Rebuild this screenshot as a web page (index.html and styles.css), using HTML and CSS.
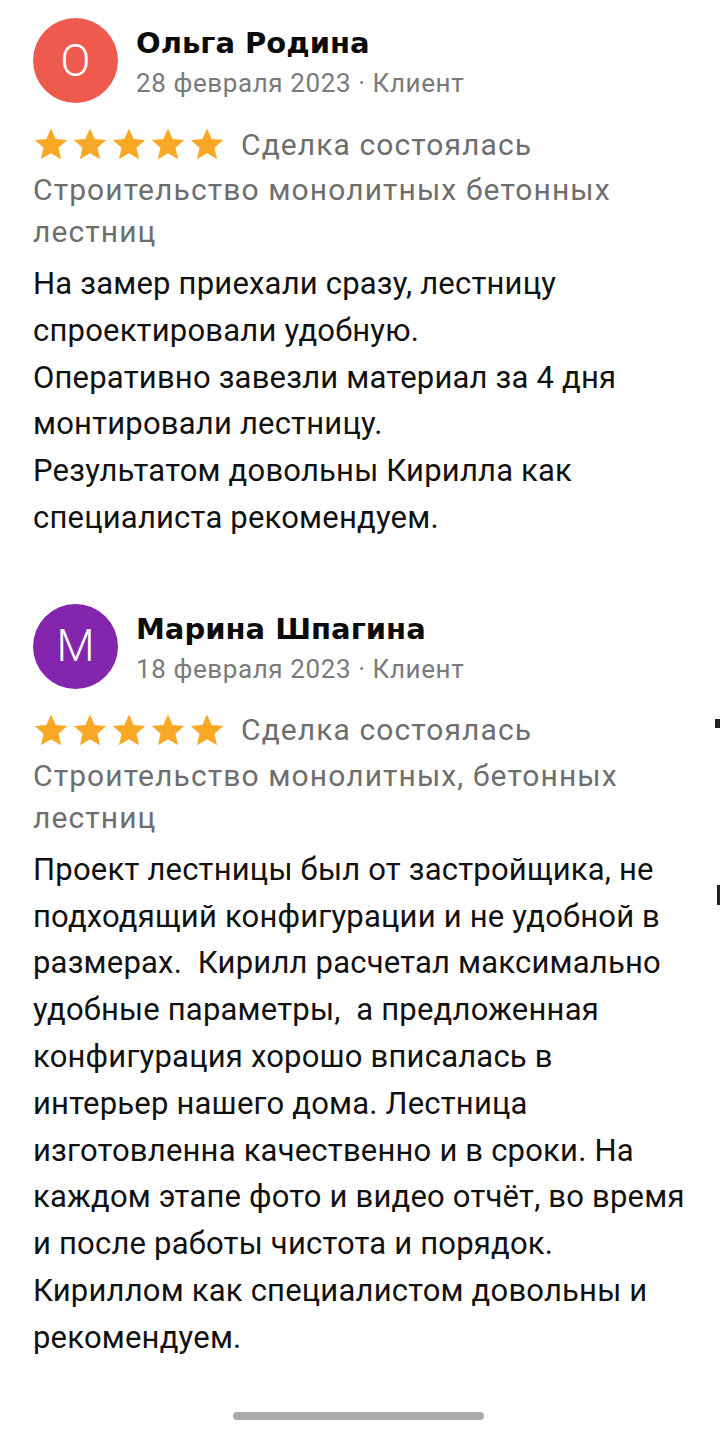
FILE: index.html
```html
<!DOCTYPE html>
<html lang="ru">
<head>
<meta charset="utf-8">
<link rel="stylesheet" href="styles.css">
</head>
<body>
<main class="page">
  <article class="review review-first">
    <header class="head">
      <div class="avatar avatar-red">О</div>
      <div class="who">
        <div class="name">Ольга Родина</div>
        <div class="meta">28 февраля 2023 · Клиент</div>
      </div>
    </header>
    <div class="rating">
      <div class="stars">
        <svg class="star" viewBox="0 0 24 24"><path d="M12 1.6l3.1 7.1 7.7.7-5.8 5.1 1.7 7.6L12 18.1l-6.7 4 1.7-7.6-5.8-5.1 7.7-.7z"/></svg>
        <svg class="star" viewBox="0 0 24 24"><path d="M12 1.6l3.1 7.1 7.7.7-5.8 5.1 1.7 7.6L12 18.1l-6.7 4 1.7-7.6-5.8-5.1 7.7-.7z"/></svg>
        <svg class="star" viewBox="0 0 24 24"><path d="M12 1.6l3.1 7.1 7.7.7-5.8 5.1 1.7 7.6L12 18.1l-6.7 4 1.7-7.6-5.8-5.1 7.7-.7z"/></svg>
        <svg class="star" viewBox="0 0 24 24"><path d="M12 1.6l3.1 7.1 7.7.7-5.8 5.1 1.7 7.6L12 18.1l-6.7 4 1.7-7.6-5.8-5.1 7.7-.7z"/></svg>
        <svg class="star" viewBox="0 0 24 24"><path d="M12 1.6l3.1 7.1 7.7.7-5.8 5.1 1.7 7.6L12 18.1l-6.7 4 1.7-7.6-5.8-5.1 7.7-.7z"/></svg>
      </div>
      <span class="deal">Сделка состоялась</span>
    </div>
    <p class="category">Строительство монолитных бетонных<br>лестниц</p>
    <p class="text">На замер приехали сразу, лестницу<br>спроектировали удобную.<br>Оперативно завезли материал за 4 дня<br>монтировали лестницу.<br>Результатом довольны Кирилла как<br>специалиста рекомендуем.</p>
  </article>

  <article class="review review-second">
    <header class="head">
      <div class="avatar avatar-purple">М</div>
      <div class="who">
        <div class="name">Марина Шпагина</div>
        <div class="meta">18 февраля 2023 · Клиент</div>
      </div>
    </header>
    <div class="rating">
      <div class="stars">
        <svg class="star" viewBox="0 0 24 24"><path d="M12 1.6l3.1 7.1 7.7.7-5.8 5.1 1.7 7.6L12 18.1l-6.7 4 1.7-7.6-5.8-5.1 7.7-.7z"/></svg>
        <svg class="star" viewBox="0 0 24 24"><path d="M12 1.6l3.1 7.1 7.7.7-5.8 5.1 1.7 7.6L12 18.1l-6.7 4 1.7-7.6-5.8-5.1 7.7-.7z"/></svg>
        <svg class="star" viewBox="0 0 24 24"><path d="M12 1.6l3.1 7.1 7.7.7-5.8 5.1 1.7 7.6L12 18.1l-6.7 4 1.7-7.6-5.8-5.1 7.7-.7z"/></svg>
        <svg class="star" viewBox="0 0 24 24"><path d="M12 1.6l3.1 7.1 7.7.7-5.8 5.1 1.7 7.6L12 18.1l-6.7 4 1.7-7.6-5.8-5.1 7.7-.7z"/></svg>
        <svg class="star" viewBox="0 0 24 24"><path d="M12 1.6l3.1 7.1 7.7.7-5.8 5.1 1.7 7.6L12 18.1l-6.7 4 1.7-7.6-5.8-5.1 7.7-.7z"/></svg>
      </div>
      <span class="deal">Сделка состоялась</span>
    </div>
    <p class="category">Строительство монолитных, бетонных<br>лестниц</p>
    <p class="text">Проект лестницы был от застройщика, не<br>подходящий конфигурации и не удобной в<br>размерах.&nbsp; Кирилл расчетал максимально<br>удобные параметры,&nbsp; а предложенная<br>конфигурация хорошо вписалась в<br>интерьер нашего дома. Лестница<br>изготовленна качественно и в сроки. На<br>каждом этапе фото и видео отчёт, во время<br>и после работы чистота и порядок.<br>Кириллом как специалистом довольны и<br>рекомендуем.</p>
  </article>

  <div class="home-bar"></div>
  <span class="edge-mark edge-mark-a"></span>
  <span class="edge-mark edge-mark-b"></span>
</main>
</body>
</html>
```

FILE: styles.css
```css
* { box-sizing: border-box; }

html, body {
  margin: 0;
  padding: 0;
  background: #ffffff;
}

body {
  font-family: Roboto, "Noto Sans", "Liberation Sans", sans-serif;
  color: #111111;
}

.page {
  position: relative;
  width: 720px;
  height: 1432px;
  padding: 18px 0 0 33px;
  overflow: hidden;
}

.review-second {
  margin-top: 62px;
}

.head {
  display: flex;
  align-items: flex-start;
  gap: 18px;
}

.avatar {
  width: 85px;
  height: 85px;
  border-radius: 50%;
  display: flex;
  align-items: center;
  justify-content: center;
  color: #ffffff;
  font-size: 44px;
  font-weight: 300;
  flex: none;
}

.avatar-red { background: #ef5a4e; }
.avatar-purple { background: #8425ae; }

.who {
  padding-top: 5px;
  display: flex;
  flex-direction: column;
}

.name {
  font-family: "DejaVu Sans", Roboto, sans-serif;
  font-size: 29px;
  font-weight: 700;
  line-height: 40px;
  color: #0b0b0b;
}

.meta {
  font-size: 26px;
  line-height: 34px;
  margin-top: 3px;
  letter-spacing: 0.6px;
  color: #7a7a7a;
}

.rating {
  display: flex;
  align-items: center;
  height: 44px;
  margin-top: 19px;
}

.stars {
  display: flex;
  gap: 3px;
}

.star {
  width: 36px;
  height: 36px;
  fill: #f8a824;
}

.deal {
  margin-left: 16px;
  font-size: 30px;
  letter-spacing: 1.1px;
  color: #6e6e6e;
}

.category {
  margin: 3px 0 0;
  font-size: 30px;
  line-height: 42px;
  letter-spacing: 1.1px;
  color: #6e6e6e;
}

.text {
  margin: 8px 0 0;
  font-size: 31px;
  line-height: 46.8px;
  letter-spacing: 0.2px;
  color: #111111;
}

.home-bar {
  position: absolute;
  left: 233px;
  top: 1412px;
  width: 251px;
  height: 8px;
  border-radius: 4px;
  background: #ababab;
}

.edge-mark {
  position: absolute;
  left: 715px;
  width: 5px;
  background: #222222;
}

.edge-mark-a { top: 719px; height: 9px; }
.edge-mark-b { top: 885px; height: 20px; width: 3px; left: 717px; }
```
